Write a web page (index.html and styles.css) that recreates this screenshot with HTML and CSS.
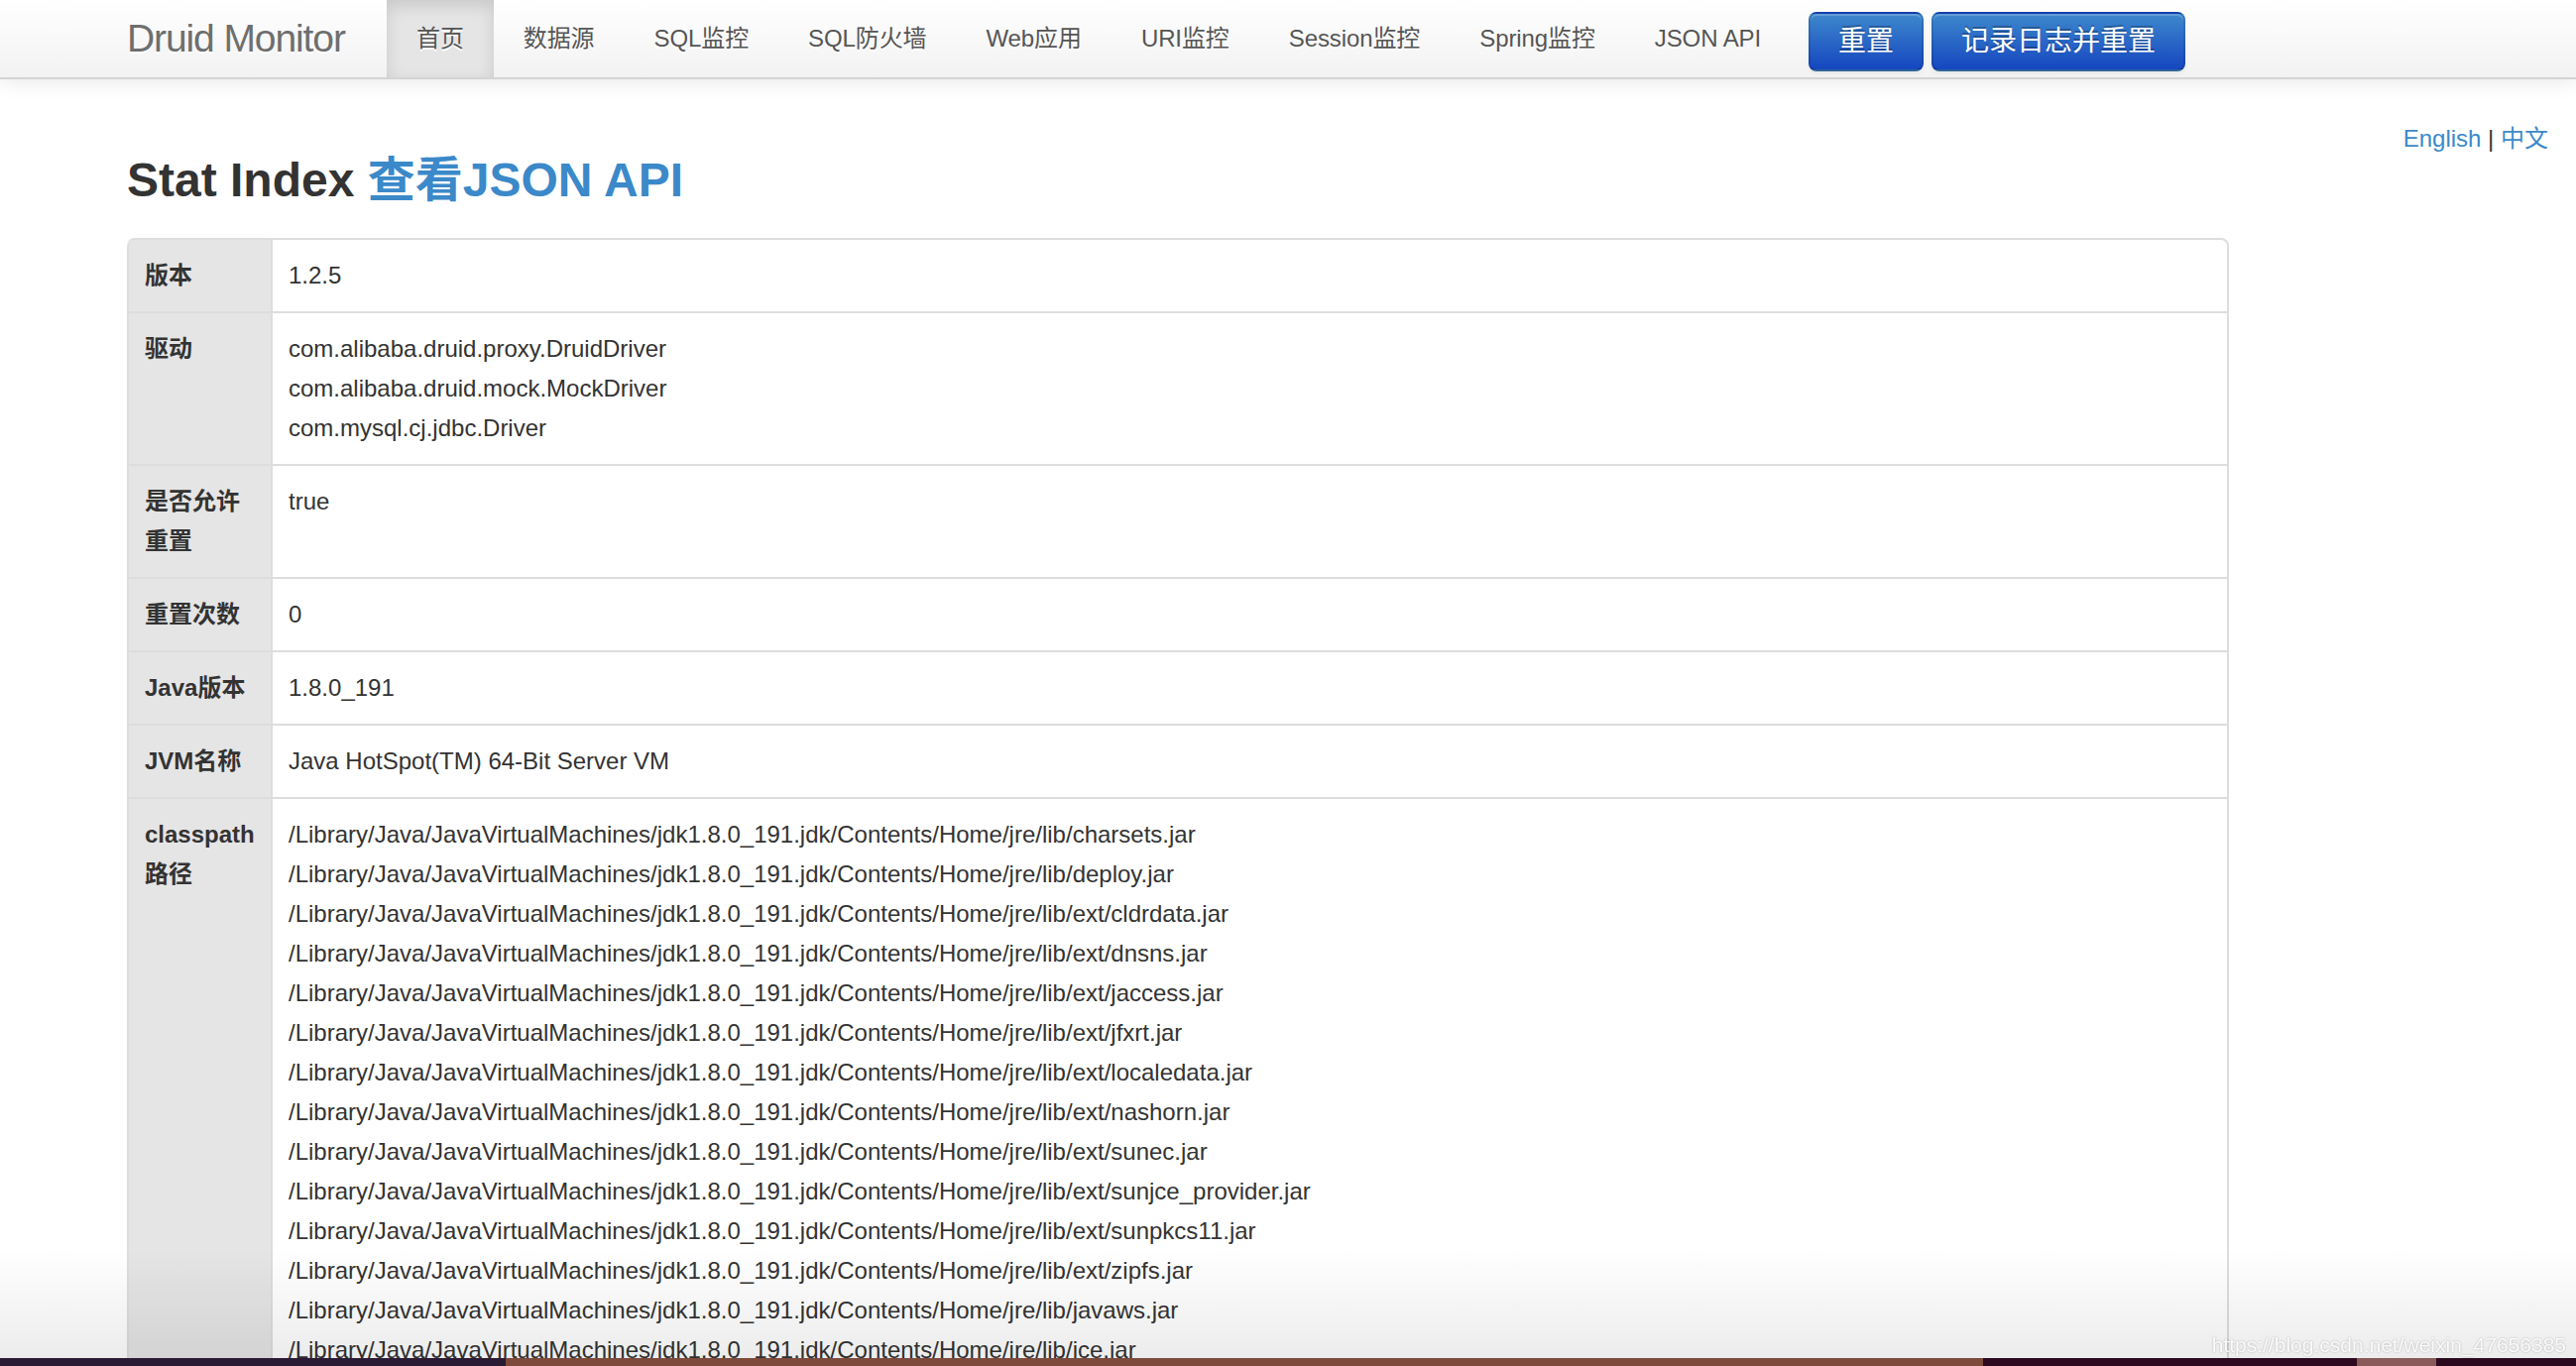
FILE: index.html
```html
<!DOCTYPE html>
<html lang="zh-CN">
<head>
<meta charset="utf-8">
<title>Druid Stat Index</title>
<link rel="stylesheet" href="styles.css">
</head>
<body>
<div class="navbar">
  <div class="navbar-inner">
    <a class="brand" href="#">Druid Monitor</a>
    <ul class="nav">
      <li class="active"><a href="#">首页</a></li>
      <li><a href="#">数据源</a></li>
      <li><a href="#">SQL监控</a></li>
      <li><a href="#">SQL防火墙</a></li>
      <li><a href="#">Web应用</a></li>
      <li><a href="#">URI监控</a></li>
      <li><a href="#">Session监控</a></li>
      <li><a href="#">Spring监控</a></li>
      <li><a href="#">JSON API</a></li>
    </ul>
    <div class="nav-actions">
      <a class="btn btn-primary" href="#">重置</a>
      <a class="btn btn-primary" href="#">记录日志并重置</a>
    </div>
  </div>
</div>

<div class="page">
  <div class="lang"><a href="#">English</a> | <a href="#">中文</a></div>
  <div class="content">
    <h3 class="title">Stat Index <a href="#">查看JSON API</a></h3>
    <table class="stat-table">
      <tbody>
        <tr><th>版本</th><td>1.2.5</td></tr>
        <tr><th>驱动</th><td>com.alibaba.druid.proxy.DruidDriver<br>com.alibaba.druid.mock.MockDriver<br>com.mysql.cj.jdbc.Driver</td></tr>
        <tr><th>是否允许重置</th><td>true</td></tr>
        <tr><th>重置次数</th><td>0</td></tr>
        <tr><th>Java版本</th><td>1.8.0_191</td></tr>
        <tr><th>JVM名称</th><td>Java HotSpot(TM) 64-Bit Server VM</td></tr>
        <tr><th>classpath 路径</th><td>/Library/Java/JavaVirtualMachines/jdk1.8.0_191.jdk/Contents/Home/jre/lib/charsets.jar<br>/Library/Java/JavaVirtualMachines/jdk1.8.0_191.jdk/Contents/Home/jre/lib/deploy.jar<br>/Library/Java/JavaVirtualMachines/jdk1.8.0_191.jdk/Contents/Home/jre/lib/ext/cldrdata.jar<br>/Library/Java/JavaVirtualMachines/jdk1.8.0_191.jdk/Contents/Home/jre/lib/ext/dnsns.jar<br>/Library/Java/JavaVirtualMachines/jdk1.8.0_191.jdk/Contents/Home/jre/lib/ext/jaccess.jar<br>/Library/Java/JavaVirtualMachines/jdk1.8.0_191.jdk/Contents/Home/jre/lib/ext/jfxrt.jar<br>/Library/Java/JavaVirtualMachines/jdk1.8.0_191.jdk/Contents/Home/jre/lib/ext/localedata.jar<br>/Library/Java/JavaVirtualMachines/jdk1.8.0_191.jdk/Contents/Home/jre/lib/ext/nashorn.jar<br>/Library/Java/JavaVirtualMachines/jdk1.8.0_191.jdk/Contents/Home/jre/lib/ext/sunec.jar<br>/Library/Java/JavaVirtualMachines/jdk1.8.0_191.jdk/Contents/Home/jre/lib/ext/sunjce_provider.jar<br>/Library/Java/JavaVirtualMachines/jdk1.8.0_191.jdk/Contents/Home/jre/lib/ext/sunpkcs11.jar<br>/Library/Java/JavaVirtualMachines/jdk1.8.0_191.jdk/Contents/Home/jre/lib/ext/zipfs.jar<br>/Library/Java/JavaVirtualMachines/jdk1.8.0_191.jdk/Contents/Home/jre/lib/javaws.jar<br>/Library/Java/JavaVirtualMachines/jdk1.8.0_191.jdk/Contents/Home/jre/lib/jce.jar</td></tr>
      </tbody>
    </table>
  </div>
</div>

<div class="screen-fade"></div>
<div class="desktop-strip"><span class="strip-dark"></span><span class="strip-brown"></span><span class="strip-dark2"></span><span class="strip-rose"></span><span class="strip-dark3"></span></div>
<div class="watermark">https://blog.csdn.net/weixin_47656385</div>
</body>
</html>
```

FILE: styles.css
```css
* { box-sizing: border-box; }

html, body {
  margin: 0;
  padding: 0;
  background: #ffffff;
  height: 100%;
  overflow: hidden;
}

body {
  font-family: "Liberation Sans", "Noto Sans CJK SC", sans-serif;
  font-size: 24px;
  line-height: 40px;
  color: #333333;
}

a { text-decoration: none; }

/* ---------- navbar ---------- */
.navbar {
  position: relative;
  z-index: 2;
  background: linear-gradient(#ffffff, #f2f2f2);
  border-bottom: 2px solid #d4d4d4;
  box-shadow: 0 2px 20px rgba(0, 0, 0, 0.1);
}

.navbar-inner {
  display: flex;
  align-items: stretch;
  height: 78px;
  padding-left: 128px;
}

.brand {
  width: 262px;
  flex: none;
  font-size: 39px;
  line-height: 78px;
  font-weight: 300;
  color: #6e6e6e;
  text-shadow: 0 2px 0 #ffffff;
  font-family: "Liberation Sans", sans-serif;
  letter-spacing: -1.1px;
}

.nav {
  display: flex;
  list-style: none;
  margin: 0;
  padding: 0;
}

.nav li a {
  display: block;
  padding: 0 30px;
  line-height: 78px;
  font-size: 24px;
  letter-spacing: -0.1px;
  color: #555555;
  text-shadow: 0 2px 0 #ffffff;
  white-space: nowrap;
}

.nav li.active a {
  background-color: #e5e5e5;
  box-shadow: inset 0 6px 16px rgba(0, 0, 0, 0.125);
  color: #555555;
}

.nav-actions {
  display: flex;
  align-items: center;
  gap: 8px;
  margin-left: 18px;
  padding-top: 6px;
}

.btn {
  display: inline-block;
  height: 60px;
  padding: 0 28px;
  font-size: 28px;
  line-height: 56px;
  color: #ffffff;
  text-shadow: 0 -2px 0 rgba(0, 0, 0, 0.25);
  border-radius: 8px;
  border: 2px solid;
  border-color: rgba(0, 0, 0, 0.1) rgba(0, 0, 0, 0.1) rgba(0, 0, 0, 0.25);
  box-shadow: inset 0 2px 0 rgba(255, 255, 255, 0.2), 0 2px 4px rgba(0, 0, 0, 0.05);
  white-space: nowrap;
}

.btn-primary {
  background-color: #2a63c7;
  background-image: linear-gradient(#3d88cc, #1546c0);
}

/* ---------- page ---------- */
.page {
  padding-top: 40px;
}

.lang {
  float: right;
  margin-right: 28px;
  line-height: 40px;
  color: #333333;
}

.lang a { color: #3b89c9; }

.content {
  margin-left: 128px;
  width: 2120px;
}

.title {
  margin: 34px 0 30px;
  font-size: 48px;
  line-height: 56px;
  font-weight: bold;
  color: #333333;
}

.title a { color: #3b89c9; }

.stat-table {
  width: 100%;
  table-layout: fixed;
  border-collapse: separate;
  border-spacing: 0;
  border: 2px solid #dddddd;
  border-left: 0;
  border-radius: 8px;
}

.stat-table th,
.stat-table td {
  padding: 16px;
  text-align: left;
  vertical-align: top;
  line-height: 40px;
  border-left: 2px solid #dddddd;
  border-top: 2px solid #dddddd;
}

.stat-table tr:first-child th,
.stat-table tr:first-child td { border-top: 0; }

.stat-table tr:first-child th { border-top-left-radius: 8px; }
.stat-table tr:first-child td { border-top-right-radius: 8px; }

.stat-table th {
  width: 145px;
  background: #e5e5e5;
  font-weight: bold;
  color: #333333;
}

.stat-table td {
  color: #333333;
}

/* ---------- screenshot overlays ---------- */
.screen-fade {
  position: fixed;
  left: 0;
  right: 0;
  bottom: 8px;
  height: 110px;
  background: linear-gradient(rgba(255, 255, 255, 1), rgba(236, 236, 236, 1));
  mix-blend-mode: multiply;
  pointer-events: none;
  z-index: 3;
}

.desktop-strip {
  position: fixed;
  left: 0;
  right: 0;
  bottom: 0;
  height: 8px;
  display: flex;
  z-index: 4;
}

.strip-dark { width: 510px; background: #2b1a33; }
.strip-brown { width: 1490px; background: #7e4a3c; }
.strip-dark2 { width: 377px; background: #2d0a20; }
.strip-rose { width: 80px; background: #8a5a5a; }
.strip-dark3 { flex: 1; background: #2b0a20; }

.watermark {
  position: fixed;
  right: 10px;
  bottom: 8px;
  font-size: 21px;
  line-height: 26px;
  color: rgba(255, 255, 255, 0.92);
  text-shadow: 0 0 2px rgba(0, 0, 0, 0.3);
  z-index: 5;
}
```
